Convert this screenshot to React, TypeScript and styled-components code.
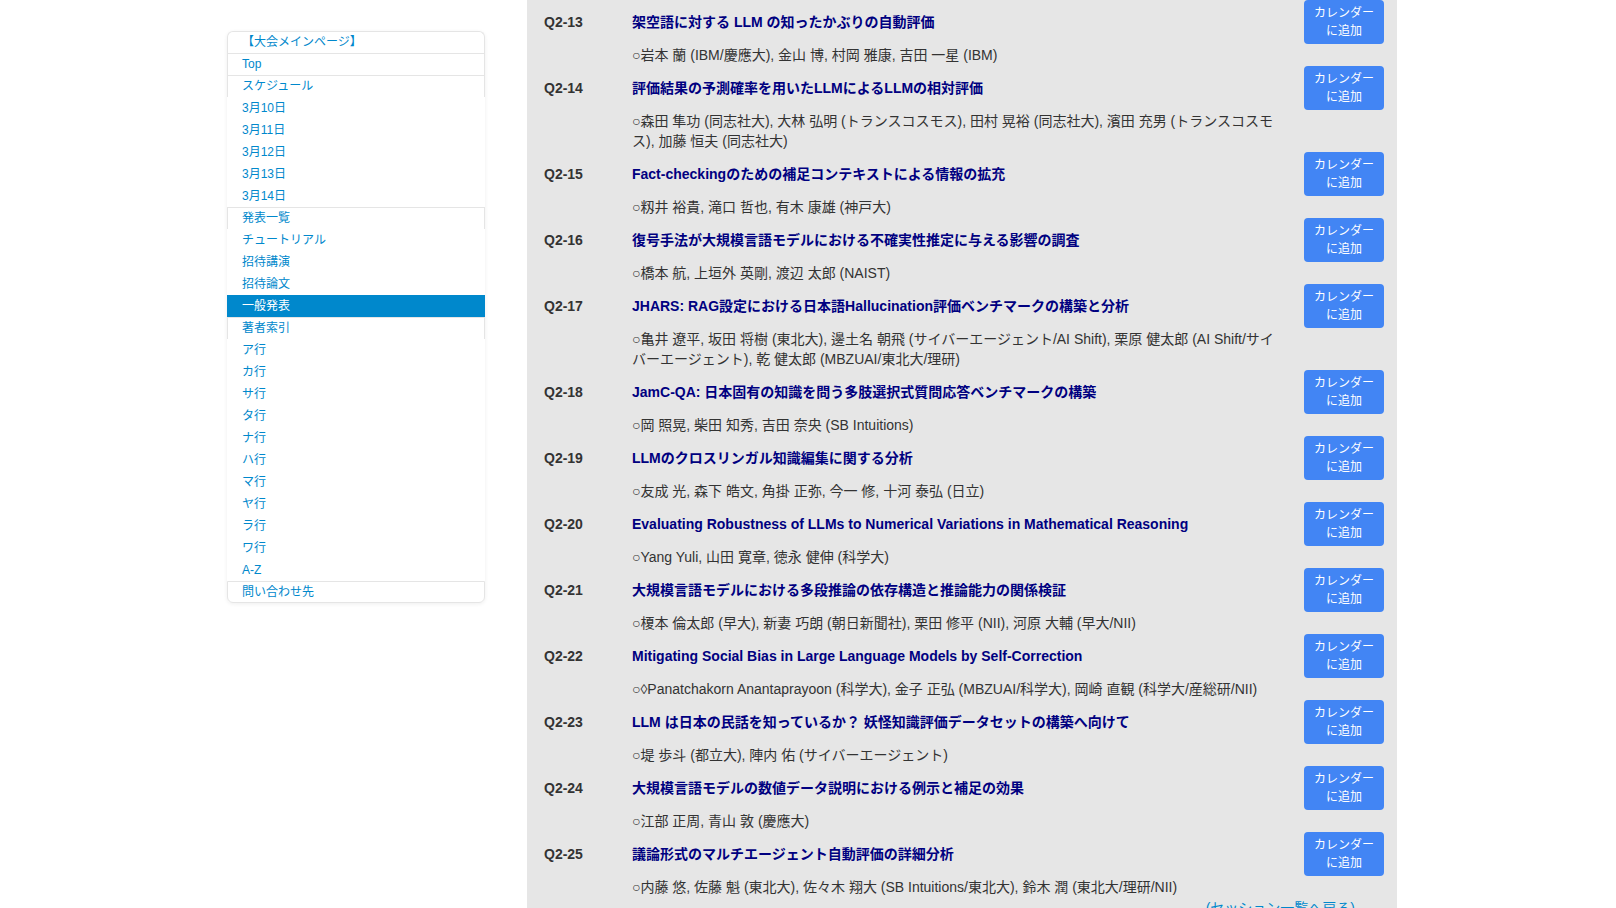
import React from "react";
import styled, { createGlobalStyle } from "styled-components";

const GlobalStyle = createGlobalStyle`
  html, body {
    margin: 0;
    padding: 0;
    background: #ffffff;
    overflow: hidden;
  }
  body {
    font-family: "Liberation Sans", "Noto Sans CJK JP", sans-serif;
    font-size: 14px;
    line-height: 20px;
    color: #333333;
  }
`;

const Container = styled.div`
  display: flex;
  align-items: flex-start;
  width: 1170px;
  margin-left: calc(50% - 581px);
`;

const SideNav = styled.ul`
  list-style: none;
  margin: 31px 0 0;
  padding: 0;
  width: 258px;
  flex: none;
  background: #ffffff;
  border-radius: 6px;
  box-shadow: 0 1px 4px rgba(0, 0, 0, 0.065);
`;

const NavItem = styled.li<{ $header?: boolean; $active?: boolean; $first?: boolean; $last?: boolean }>`
  display: block;
  box-sizing: border-box;
  height: 22px;
  line-height: ${(p) => (p.$header ? "21px" : "22px")};
  padding-left: 14px;
  font-size: 12px;
  color: ${(p) => (p.$active ? "#ffffff" : "#0088cc")};
  background: ${(p) => (p.$active ? "#0088cc" : "#ffffff")};
  border-left: 1px solid ${(p) => (p.$header ? "#e5e5e5" : "transparent")};
  border-right: 1px solid ${(p) => (p.$header ? "#e5e5e5" : "transparent")};
  border-top: ${(p) => (p.$header ? "1px solid #e5e5e5" : "none")};
  border-bottom: ${(p) => (p.$last ? "1px solid #e5e5e5" : "none")};
  border-radius: ${(p) => (p.$first ? "6px 6px 0 0" : p.$last ? "0 0 6px 6px" : "0")};
  white-space: nowrap;
  cursor: pointer;
`;

const Main = styled.div`
  box-sizing: border-box;
  width: 870px;
  margin-left: 42px;
  padding: 0 13px 0 17px;
  background: #e6e6e6;
  min-height: 908px;
`;

const Row = styled.div`
  display: grid;
  grid-template-columns: 88px 1fr 80px;
  column-gap: 0;
  align-items: start;
`;

const Num = styled.div`
  padding-top: 12px;
  font-weight: bold;
  font-size: 14px;
  line-height: 20px;
  color: #333333;
`;

const Body = styled.div`
  padding: 12px 24px 1px 0;
`;

const Title = styled.div`
  font-weight: bold;
  font-size: 14px;
  line-height: 20px;
  color: #000080;
`;

const Authors = styled.div`
  margin-top: 13px;
  font-size: 14px;
  line-height: 20px;
  color: #333333;
`;

const CalButton = styled.button`
  box-sizing: border-box;
  width: 80px;
  height: 44px;
  padding: 4px 0;
  border: none;
  border-radius: 4px;
  background: #4285f4;
  color: #ffffff;
  font-family: "Liberation Sans", "Noto Sans CJK JP", sans-serif;
  font-size: 12px;
  line-height: 18px;
  text-align: center;
  cursor: pointer;
`;

const Footer = styled.div`
  text-align: right;
  padding-right: 29px;
  font-size: 14px;
  line-height: 20px;
  color: #0088cc;
`;

const nav: { label: string; header?: boolean; active?: boolean }[] = [
  { label: "【大会メインページ】", header: true },
  { label: "Top", header: true },
  { label: "スケジュール", header: true },
  { label: "3月10日" },
  { label: "3月11日" },
  { label: "3月12日" },
  { label: "3月13日" },
  { label: "3月14日" },
  { label: "発表一覧", header: true },
  { label: "チュートリアル" },
  { label: "招待講演" },
  { label: "招待論文" },
  { label: "一般発表", active: true },
  { label: "著者索引", header: true },
  { label: "ア行" },
  { label: "カ行" },
  { label: "サ行" },
  { label: "タ行" },
  { label: "ナ行" },
  { label: "ハ行" },
  { label: "マ行" },
  { label: "ヤ行" },
  { label: "ラ行" },
  { label: "ワ行" },
  { label: "A-Z" },
  { label: "問い合わせ先", header: true },
];

const papers: [string, string, string][] = [
  ["Q2-13", "架空語に対する LLM の知ったかぶりの自動評価", "○岩本 蘭 (IBM/慶應大), 金山 博, 村岡 雅康, 吉田 一星 (IBM)"],
  ["Q2-14", "評価結果の予測確率を用いたLLMによるLLMの相対評価", "○森田 隼功 (同志社大), 大林 弘明 (トランスコスモス), 田村 晃裕 (同志社大), 濱田 充男 (トランスコスモス), 加藤 恒夫 (同志社大)"],
  ["Q2-15", "Fact-checkingのための補足コンテキストによる情報の拡充", "○籾井 裕貴, 滝口 哲也, 有木 康雄 (神戸大)"],
  ["Q2-16", "復号手法が大規模言語モデルにおける不確実性推定に与える影響の調査", "○橋本 航, 上垣外 英剛, 渡辺 太郎 (NAIST)"],
  ["Q2-17", "JHARS: RAG設定における日本語Hallucination評価ベンチマークの構築と分析", "○亀井 遼平, 坂田 将樹 (東北大), 邊土名 朝飛 (サイバーエージェント/AI Shift), 栗原 健太郎 (AI Shift/サイバーエージェント), 乾 健太郎 (MBZUAI/東北大/理研)"],
  ["Q2-18", "JamC-QA: 日本固有の知識を問う多肢選択式質問応答ベンチマークの構築", "○岡 照晃, 柴田 知秀, 吉田 奈央 (SB Intuitions)"],
  ["Q2-19", "LLMのクロスリンガル知識編集に関する分析", "○友成 光, 森下 皓文, 角掛 正弥, 今一 修, 十河 泰弘 (日立)"],
  ["Q2-20", "Evaluating Robustness of LLMs to Numerical Variations in Mathematical Reasoning", "○Yang Yuli, 山田 寛章, 徳永 健伸 (科学大)"],
  ["Q2-21", "大規模言語モデルにおける多段推論の依存構造と推論能力の関係検証", "○榎本 倫太郎 (早大), 新妻 巧朗 (朝日新聞社), 栗田 修平 (NII), 河原 大輔 (早大/NII)"],
  ["Q2-22", "Mitigating Social Bias in Large Language Models by Self-Correction", "○◊Panatchakorn Anantaprayoon (科学大), 金子 正弘 (MBZUAI/科学大), 岡崎 直観 (科学大/産総研/NII)"],
  ["Q2-23", "LLM は日本の民話を知っているか？ 妖怪知識評価データセットの構築へ向けて", "○堤 歩斗 (都立大), 陣内 佑 (サイバーエージェント)"],
  ["Q2-24", "大規模言語モデルの数値データ説明における例示と補足の効果", "○江部 正周, 青山 敦 (慶應大)"],
  ["Q2-25", "議論形式のマルチエージェント自動評価の詳細分析", "○内藤 悠, 佐藤 魁 (東北大), 佐々木 翔大 (SB Intuitions/東北大), 鈴木 潤 (東北大/理研/NII)"],
];

export default function App() {
  return (
    <>
      <GlobalStyle />
      <Container>
        <SideNav>
          {nav.map((n, i) => (
            <NavItem
              key={n.label}
              $header={n.header}
              $active={n.active}
              $first={i === 0}
              $last={i === nav.length - 1}
            >
              {n.label}
            </NavItem>
          ))}
        </SideNav>
        <Main>
          {papers.map(([id, title, authors]) => (
            <Row key={id}>
              <Num>{id}</Num>
              <Body>
                <Title>{title}</Title>
                <Authors>{authors}</Authors>
              </Body>
              <CalButton>
                カレンダー
                <br />
                に追加
              </CalButton>
            </Row>
          ))}
          <Footer>(セッション一覧へ戻る)</Footer>
        </Main>
      </Container>
    </>
  );
}
